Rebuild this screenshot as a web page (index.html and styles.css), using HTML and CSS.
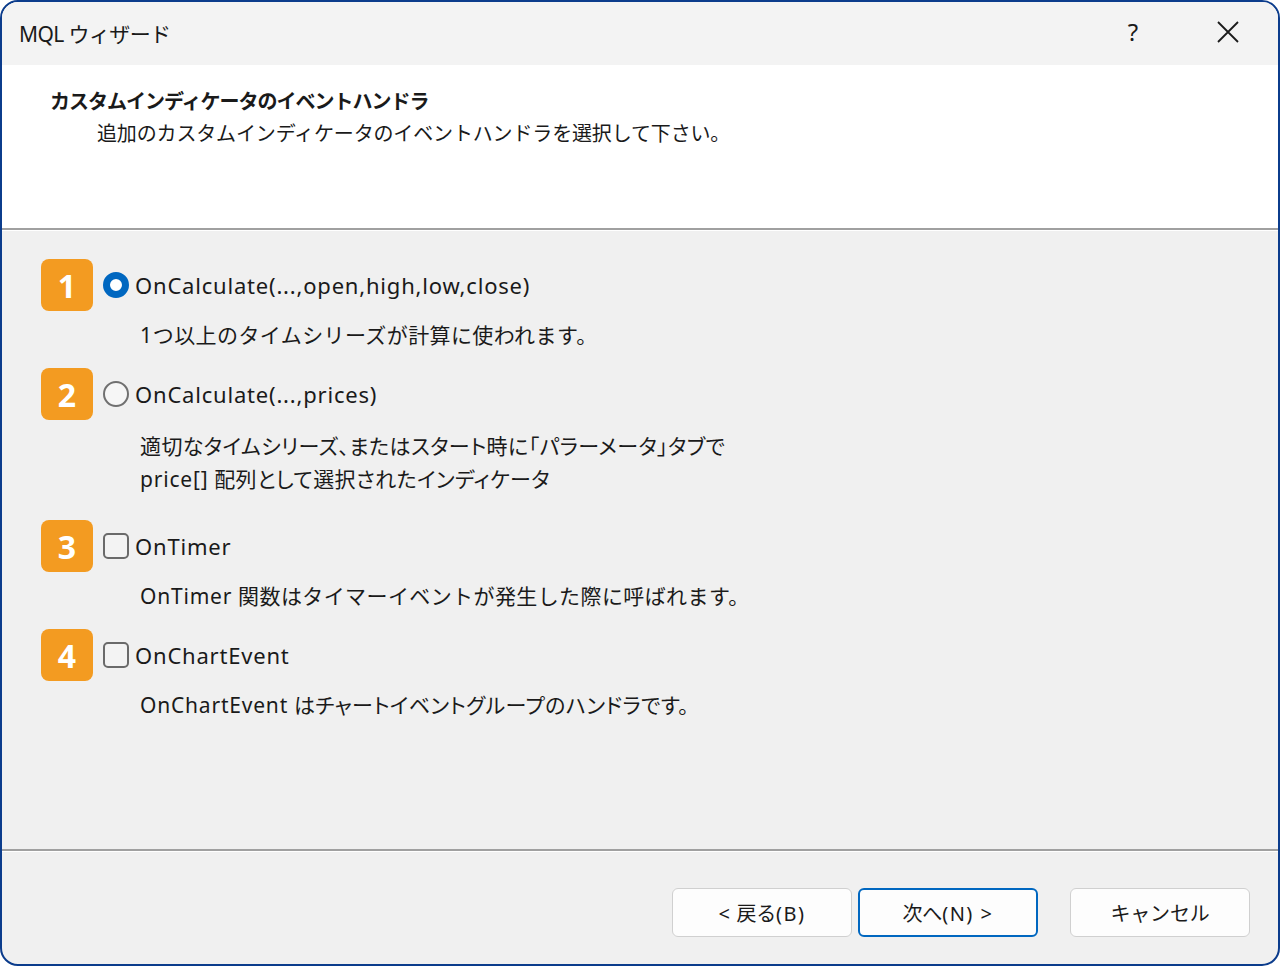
FILE: index.html
```html
<!DOCTYPE html>
<html lang="ja">
<head>
  <meta charset="UTF-8">
  <title>MQL ウィザード</title>
  <link rel="stylesheet" href="styles.css">
</head>
<body>
  <div class="window">
    <!-- Title bar -->
    <div class="titlebar">
      <span class="title">MQL ウィザード</span>
      <span class="help">?</span>
      <span class="close">
        <svg width="24" height="24" viewBox="0 0 24 24"><path d="M2 2 L22 22 M22 2 L2 22" stroke="#1a1a1a" stroke-width="1.8" fill="none"/></svg>
      </span>
    </div>

    <!-- Header -->
    <div class="header">
      <div class="header-title">カスタムインディケータのイベントハンドラ</div>
      <div class="header-sub">追加のカスタムインディケータのイベントハンドラを選択して下さい。</div>
    </div>
    <div class="sep"></div>

    <!-- Options -->
    <div class="content">
      <div class="option">
        <div class="row">
          <span class="badge">1</span>
          <span class="radio checked"></span>
          <span class="label">OnCalculate(...,open,high,low,close)</span>
        </div>
        <div class="desc"><span class="en">1</span>つ以上のタイムシリーズが計算に使われます。</div>
      </div>

      <div class="option wide">
        <div class="row">
          <span class="badge">2</span>
          <span class="radio"></span>
          <span class="label">OnCalculate(...,prices)</span>
        </div>
        <div class="desc two prop">適切なタイムシリーズ、またはスタート時に「パラーメータ」タブで<br><span class="en">price[]</span> 配列として選択されたインディケータ</div>
      </div>

      <div class="option">
        <div class="row">
          <span class="badge">3</span>
          <span class="check"></span>
          <span class="label">OnTimer</span>
        </div>
        <div class="desc"><span class="en">OnTimer</span> 関数はタイマーイベントが発生した際に呼ばれます。</div>
      </div>

      <div class="option">
        <div class="row">
          <span class="badge">4</span>
          <span class="check"></span>
          <span class="label">OnChartEvent</span>
        </div>
        <div class="desc prop"><span class="en">OnChartEvent</span> はチャートイベントグループのハンドラです。</div>
      </div>
    </div>
    <div class="sep"></div>

    <!-- Buttons -->
    <div class="footer">
      <button class="btn"><span class="en">&lt;</span> 戻る<span class="en">(B)</span></button>
      <button class="btn primary">次へ<span class="en">(N) &gt;</span></button>
      <button class="btn cancel">キャンセル</button>
    </div>
  </div>
</body>
</html>
```

FILE: styles.css
```css
/* General */
body {
  margin: 0;
  padding: 0;
  background: #ffffff;
  font-family: "Noto Sans", "Noto Sans CJK JP", sans-serif;
  color: #1a1a1a;
}

.window {
  box-sizing: border-box;
  width: 1280px;
  height: 966px;
  border: 2px solid #0b3c8c;
  border-radius: 18px;
  overflow: hidden;
  background: #f0f0f0;
  display: flex;
  flex-direction: column;
}

.en {
  letter-spacing: 0.8px;
}

/* Title bar */
.titlebar {
  height: 63px;
  background: #f3f3f3;
  display: flex;
  align-items: center;
  padding-left: 17px;
  flex-shrink: 0;
}

.title {
  font-size: 21px;
  flex: 1;
  letter-spacing: -0.6px;
  margin-top: -2px;
}

.help {
  font-size: 24px;
  width: 30px;
  text-align: center;
  margin-right: 68px;
  margin-top: -4px;
}

.close {
  width: 24px;
  height: 24px;
  margin-right: 38px;
  margin-top: -4px;
}

/* Header */
.header {
  height: 163px;
  background: #ffffff;
  padding: 22px 0 0 48px;
  box-sizing: border-box;
  flex-shrink: 0;
}

.header-title {
  font-size: 20px;
  font-weight: bold;
  line-height: 30px;
  letter-spacing: -1px;
}

.header-sub {
  font-size: 20px;
  line-height: 34px;
  padding-left: 47px;
  letter-spacing: -0.15px;
}

.sep {
  height: 2px;
  background: #a0a0a0;
  border-bottom: 1px solid #ffffff;
  flex-shrink: 0;
}

/* Options */
.content {
  flex: 1;
  padding: 28px 0 0 39px;
}

.option {
  margin-bottom: 16px;
}

.option.wide {
  margin-bottom: 24px;
}

.row {
  display: flex;
  align-items: center;
  height: 52px;
}

.badge {
  width: 52px;
  height: 52px;
  border-radius: 8px;
  background: #f39b21;
  color: #ffffff;
  font-family: "Open Sans", sans-serif;
  font-weight: bold;
  font-size: 32px;
  display: flex;
  align-items: center;
  justify-content: center;
  margin-right: 10px;
}

.radio {
  box-sizing: border-box;
  width: 26px;
  height: 26px;
  border-radius: 50%;
  border: 2px solid #707070;
  background: #f6f6f6;
  margin-right: 8px;
}

.radio.checked {
  border: 7px solid #0067c0;
  background: #ffffff;
}

.check {
  box-sizing: border-box;
  width: 26px;
  height: 26px;
  border-radius: 5px;
  border: 2px solid #6a6a6a;
  background: #f3f3f3;
  margin-right: 8px;
}

.label {
  font-size: 22px;
  letter-spacing: 0.8px;
  margin-left: -2px;
}

.desc {
  margin-top: 8px;
  padding-left: 99px;
  font-size: 21px;
  line-height: 33px;
  letter-spacing: 0.4px;
}

.desc.two {
  margin-top: 10px;
}

/* proportional kana and punctuation */
.desc.prop {
  font-feature-settings: "palt";
}

/* Footer */
.footer {
  height: 112px;
  display: flex;
  justify-content: flex-end;
  align-items: flex-start;
  padding: 36px 28px 0 0;
  box-sizing: border-box;
  flex-shrink: 0;
}

.btn {
  width: 180px;
  height: 49px;
  border: 1px solid #d0d0d0;
  border-radius: 6px;
  background: #fdfdfd;
  font-family: "Noto Sans", "Noto Sans CJK JP", sans-serif;
  font-size: 20px;
  color: #1a1a1a;
  margin-left: 6px;
  letter-spacing: -0.2px;
}

.btn .en {
  letter-spacing: 1.5px;
}

.btn.primary {
  border: 2px solid #0067c0;
}

.btn.cancel {
  margin-left: 32px;
}
```
